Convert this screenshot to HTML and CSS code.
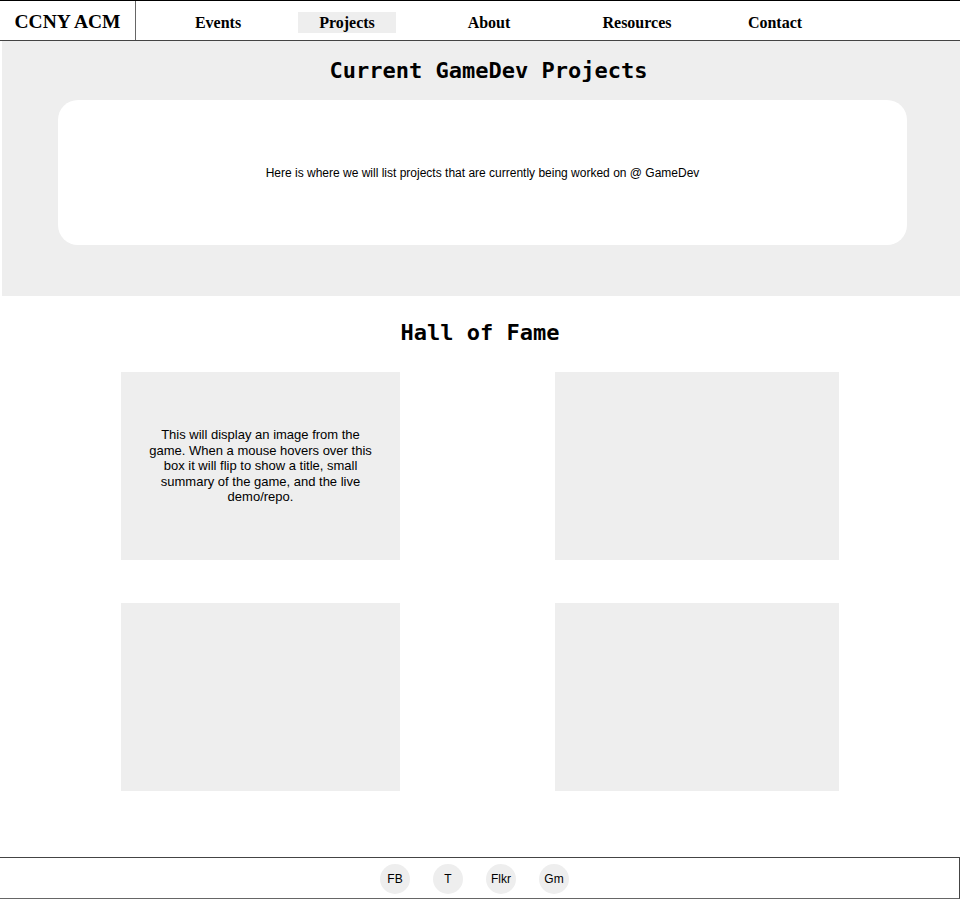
FILE: index.html
```html
<!DOCTYPE html>
<html lang="en">
<head>
<meta charset="utf-8">
<title>CCNY ACM - GameDev Projects</title>
<link rel="stylesheet" href="styles.css">
</head>
<body>
<header class="topbar">
  <div class="logo">CCNY ACM</div>
  <nav class="nav">
    <a class="nav-item nav-events" href="#">Events</a>
    <a class="nav-item nav-projects active" href="#">Projects</a>
    <a class="nav-item nav-about" href="#">About</a>
    <a class="nav-item nav-resources" href="#">Resources</a>
    <a class="nav-item nav-contact" href="#">Contact</a>
  </nav>
</header>

<section class="current">
  <h2 class="section-title current-title">Current GameDev Projects</h2>
  <div class="current-card">Here is where we will list projects that are currently being worked on @ GameDev</div>
</section>

<section class="hall">
  <h2 class="section-title hall-title">Hall of Fame</h2>
  <div class="hall-grid">
    <div class="game-card"><p>This will display an image from the game. When a mouse hovers over this box it will flip to show a title, small summary of the game, and the live demo/repo.</p></div>
    <div class="game-card"></div>
    <div class="game-card"></div>
    <div class="game-card"></div>
  </div>
</section>

<footer class="footer">
  <a class="social" href="#">FB</a>
  <a class="social" href="#">T</a>
  <a class="social" href="#">Flkr</a>
  <a class="social" href="#">Gm</a>
</footer>
</body>
</html>
```

FILE: styles.css
```css
* { box-sizing: border-box; }

body {
  margin: 0;
  font-family: "Liberation Sans", Arial, sans-serif;
  color: #000;
  background: #fff;
}

a { color: #000; text-decoration: none; }

.topbar {
  display: flex;
  height: 41px;
  border-top: 1px solid #000;
  border-bottom: 1px solid #444;
  font-family: "Liberation Serif", "Times New Roman", serif;
  font-weight: bold;
}

.logo {
  width: 136px;
  border-right: 1px solid #666;
  display: flex;
  align-items: center;
  justify-content: center;
  font-size: 19.5px;
  padding-top: 2px;
}

.nav {
  display: flex;
  align-items: center;
  font-size: 16px;
  padding-top: 3px;
}

.nav-item {
  display: block;
  width: 98px;
  text-align: center;
  line-height: 21px;
}

.nav-events { margin-left: 33px; }
.nav-projects { margin-left: 31px; }
.nav-about { margin-left: 44px; }
.nav-resources { margin-left: 49px; width: 100px; }
.nav-contact { margin-left: 39px; }

.nav-item.active { background: #eee; }

.current {
  margin-left: 2px;
  background: #eee;
  padding: 17px 53px 51px 56px;
}

.section-title {
  margin: 0;
  text-align: center;
  font-family: "DejaVu Sans Mono", "Liberation Mono", monospace;
  font-weight: bold;
  font-size: 22px;
  line-height: 26px;
}

.current-title {
  padding-left: 12px;
}

.current-card {
  margin-top: 16px;
  height: 145px;
  background: #fff;
  border-radius: 20px;
  display: flex;
  align-items: center;
  justify-content: center;
  font-size: 12px;
}

.hall {
  padding-top: 24px;
}

.hall-grid {
  margin-top: 26px;
  display: grid;
  grid-template-columns: 279px 284px;
  grid-auto-rows: 188px;
  column-gap: 155px;
  row-gap: 43px;
  padding-left: 121px;
}

.game-card {
  background: #eee;
  display: flex;
  align-items: center;
  justify-content: center;
  padding: 0 25px;
}

.game-card p {
  margin: 0;
  text-align: center;
  font-size: 13px;
  line-height: 15.6px;
}

.footer {
  margin-top: 66px;
  width: 960px;
  height: 42px;
  border-top: 1px solid #444;
  border-right: 1px solid #444;
  border-bottom: 1px solid #666;
  display: flex;
  align-items: center;
  justify-content: center;
  gap: 23px;
  padding: 1px 10px 0 0;
}

.social {
  width: 30px;
  height: 30px;
  border-radius: 50%;
  background: #eee;
  display: flex;
  align-items: center;
  justify-content: center;
  font-size: 12px;
}
```
